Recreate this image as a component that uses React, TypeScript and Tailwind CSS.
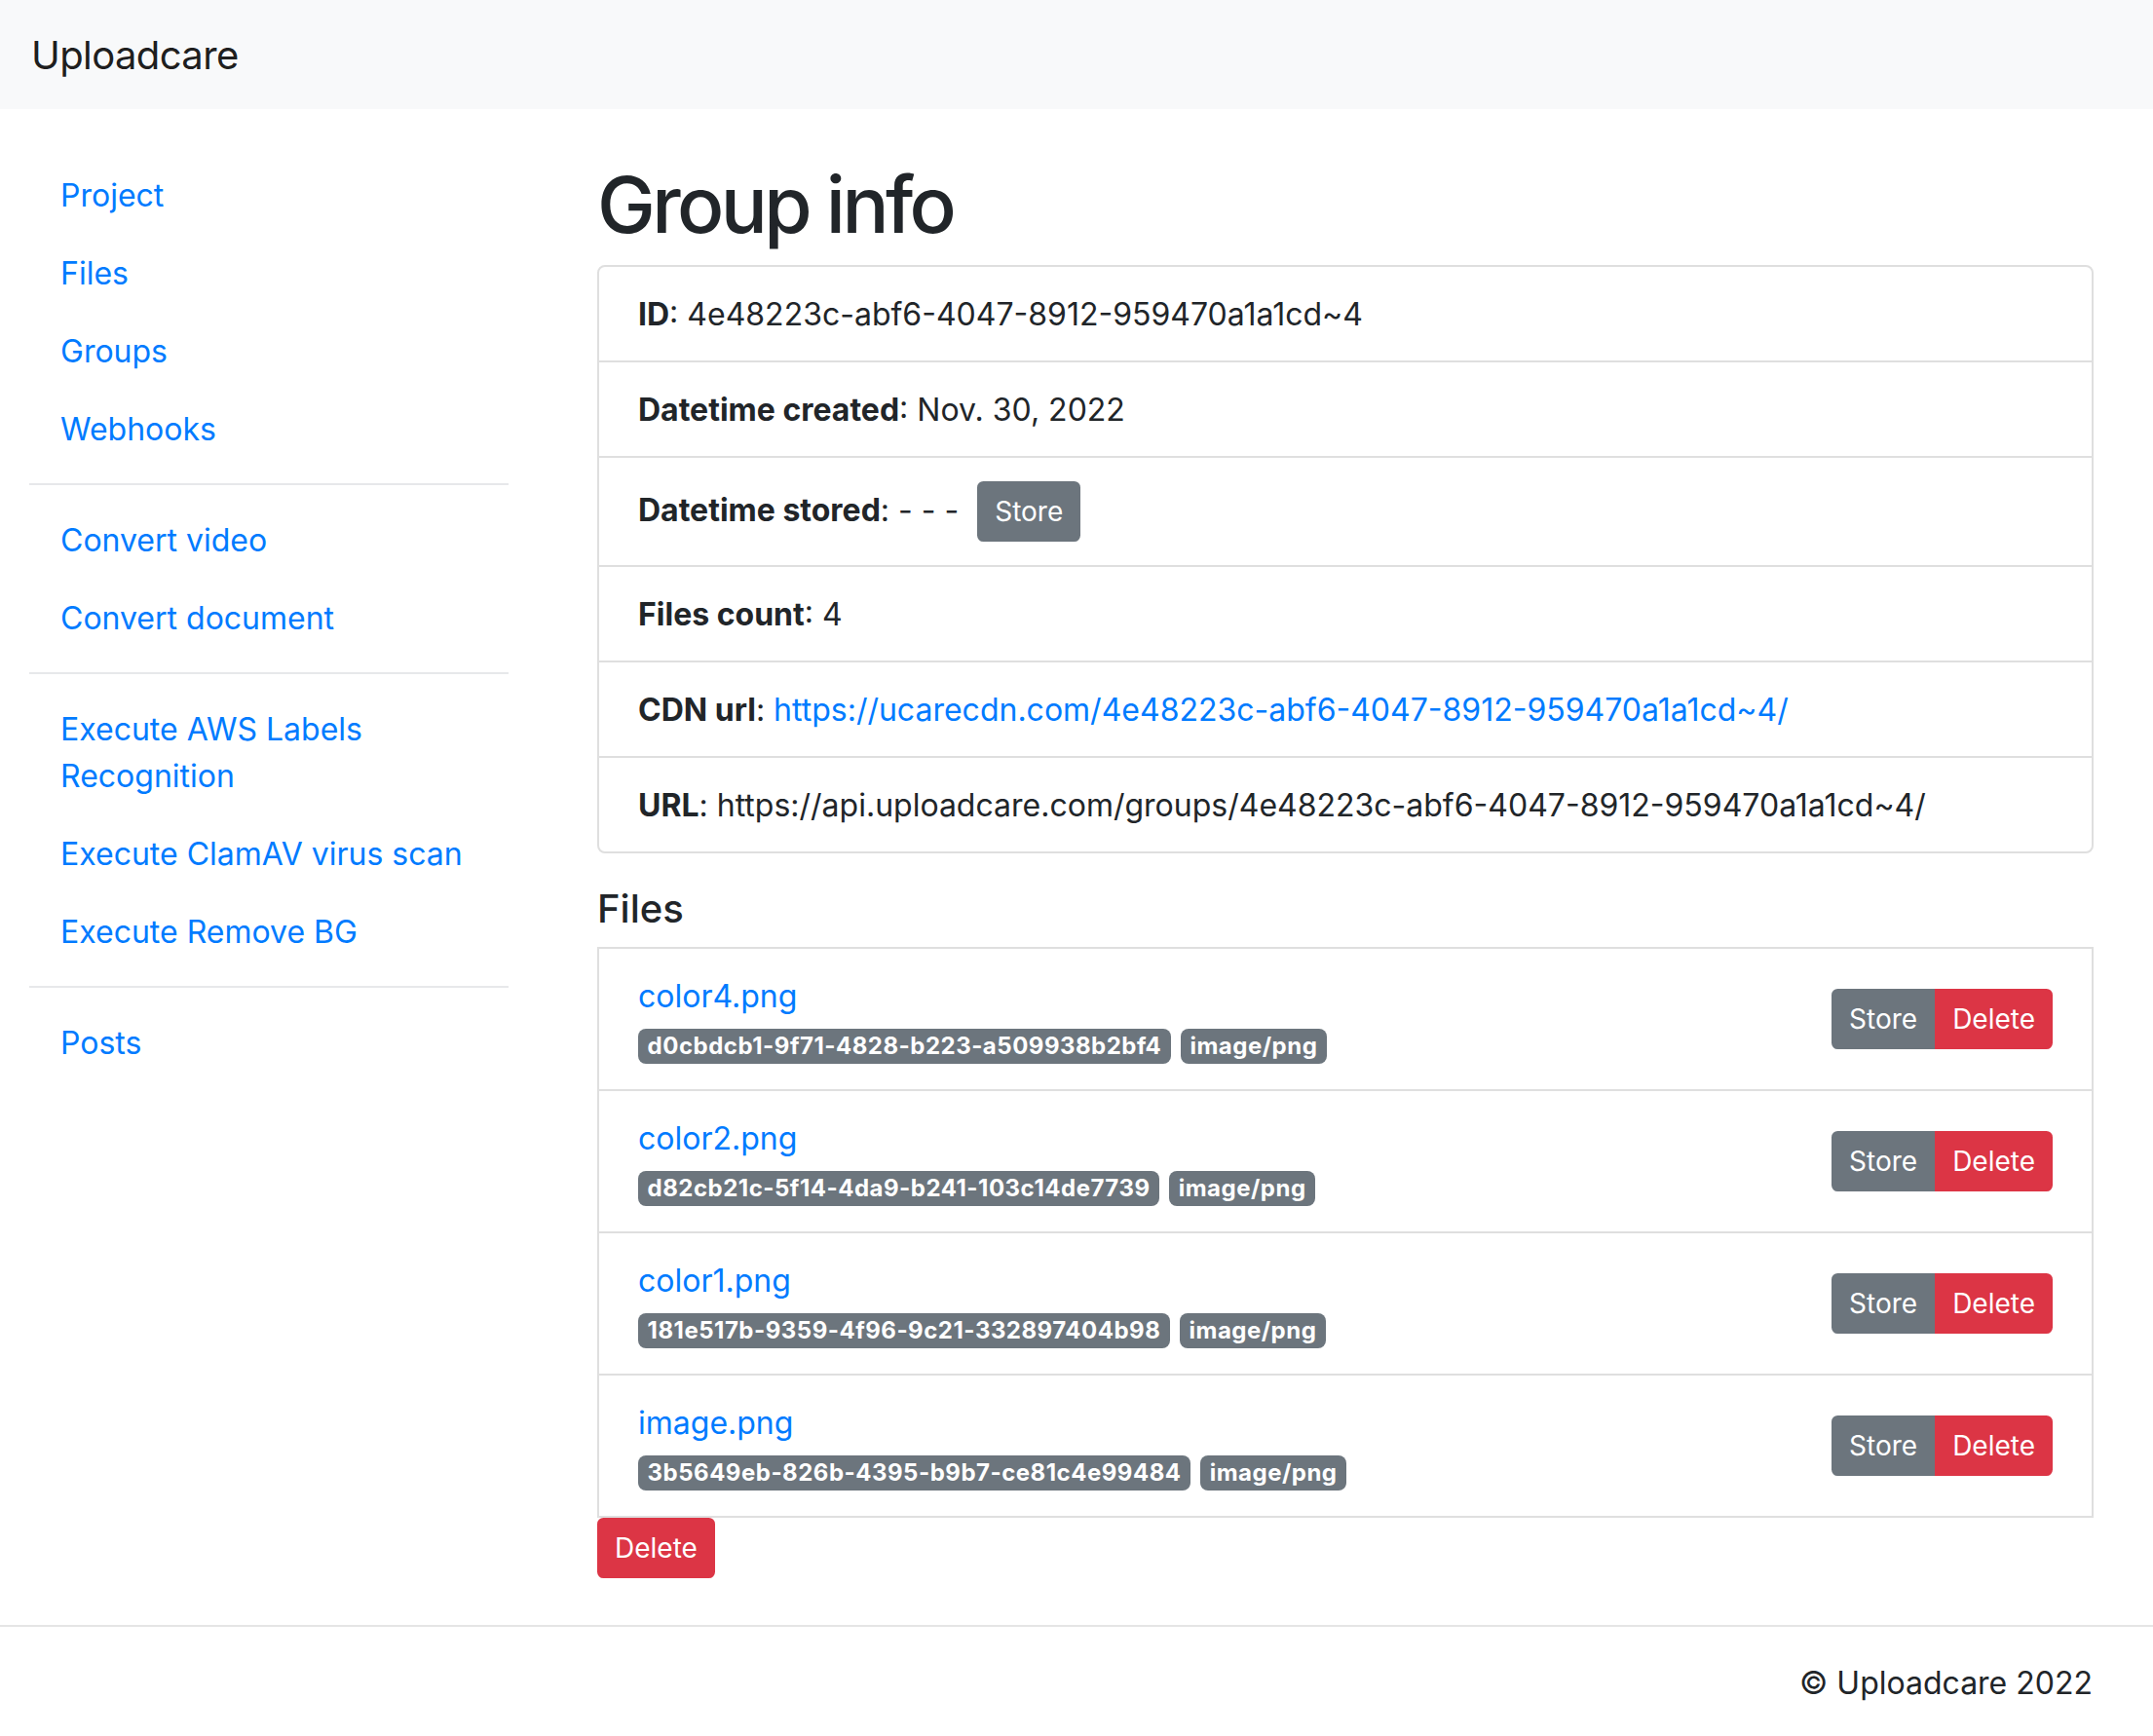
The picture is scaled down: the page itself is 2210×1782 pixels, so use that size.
import React from "react";

const sideGroups: string[][] = [
  ["Project", "Files", "Groups", "Webhooks"],
  ["Convert video", "Convert document"],
  ["Execute AWS Labels Recognition", "Execute ClamAV virus scan", "Execute Remove BG"],
  ["Posts"],
];

const files = [
  { name: "color4.png", uuid: "d0cbdcb1-9f71-4828-b223-a509938b2bf4" },
  { name: "color2.png", uuid: "d82cb21c-5f14-4da9-b241-103c14de7739" },
  { name: "color1.png", uuid: "181e517b-9359-4f96-9c21-332897404b98" },
  { name: "image.png", uuid: "3b5649eb-826b-4395-b9b7-ce81c4e99484" },
];

function Badge({ children }: { children: React.ReactNode }) {
  return (
    <span className="inline-block rounded-[8px] bg-[#6c757d] px-[9.6px] py-[6px] text-[24px] font-bold leading-[24px] tracking-[0.5px] text-white">
      {children}
    </span>
  );
}

export default function App() {
  return (
    <div className="min-h-screen bg-white font-['Inter',sans-serif] text-[32px] leading-[48px] text-[#212529]">
      <nav className="flex h-[112px] items-center bg-[#f8f9fa] px-[32px]">
        <span className="pt-[2px] text-[40px] leading-[60px] tracking-[-0.6px] text-[#000000e6]">Uploadcare</span>
      </nav>

      <div className="flex">
        <aside className="w-[552px] shrink-0 px-[30px] pt-[48px]">
          {sideGroups.map((group, gi) => (
            <div key={gi}>
              {gi > 0 && <hr className="my-[16px] border-0 border-t-2 border-[#e7e8ea]" />}
              {group.map((item) => (
                <a key={item} href="#" className="block px-[32px] pb-[15px] pt-[17px] text-[#007bff]">
                  {item}
                </a>
              ))}
            </div>
          ))}
        </aside>

        <main className="min-w-0 flex-1 pl-[61px] pr-[61px] pt-[48px]">
          <h1 className="mb-[16px] pt-[3px] pb-[-3px] text-[80px] font-medium leading-[93px] tracking-[-3.6px]">Group info</h1>

          <div className="rounded-[8px] border-2 border-[#dfdfdf] divide-y-2 divide-[#dfdfdf]">
            <div className="px-[40px] pb-[23px] pt-[25px]">
              <b>ID</b>: 4e48223c-abf6-4047-8912-959470a1a1cd~4
            </div>
            <div className="px-[40px] pb-[23px] pt-[25px]">
              <b>Datetime created</b>: Nov. 30, 2022
            </div>
            <div className="px-[40px] py-[24px]">
              <b>Datetime stored</b>: - - -{" "}
              <button className="ml-[10px] inline-block rounded-[6.4px] border-2 border-[#6c757d] bg-[#6c757d] px-[16px] py-[8px] text-[28px] leading-[42px] text-white">
                Store
              </button>
            </div>
            <div className="px-[40px] pb-[23px] pt-[25px]">
              <b>Files count</b>: 4
            </div>
            <div className="px-[40px] pb-[23px] pt-[25px]">
              <b>CDN url</b>:{" "}
              <a href="#" className="text-[#007bff]">
                https://ucarecdn.com/4e48223c-abf6-4047-8912-959470a1a1cd~4/
              </a>
            </div>
            <div className="px-[40px] pb-[23px] pt-[25px]">
              <b>URL</b>: https://api.uploadcare.com/groups/4e48223c-abf6-4047-8912-959470a1a1cd~4/
            </div>
          </div>

          <h5 className="mb-[16px] mt-[32px] pt-[2px] text-[40px] font-medium leading-[46px]">Files</h5>

          <div className="border-2 border-[#dfdfdf] divide-y-2 divide-[#dfdfdf]">
            {files.map((f) => (
              <div key={f.uuid} className="flex items-center justify-between px-[40px] py-[24px]">
                <div>
                  <a href="#" className="block pt-[2px] leading-[46px] text-[#007bff]">
                    {f.name}
                  </a>
                  <div className="flex h-[48px] items-center gap-[10px] pt-[8px]">
                    <Badge>{f.uuid}</Badge>
                    <Badge>image/png</Badge>
                  </div>
                </div>
                <div className="flex">
                  <button className="rounded-l-[6.4px] border-2 border-[#6c757d] bg-[#6c757d] px-[16px] py-[8px] text-[28px] leading-[42px] text-white">
                    Store
                  </button>
                  <button className="rounded-r-[6.4px] border-2 border-[#dc3545] bg-[#dc3545] px-[16px] py-[8px] text-[28px] leading-[42px] text-white">
                    Delete
                  </button>
                </div>
              </div>
            ))}
          </div>
          <button className="rounded-[6.4px] border-2 border-[#dc3545] bg-[#dc3545] px-[16px] py-[8px] text-[28px] leading-[42px] text-white">
            Delete
          </button>
        </main>
      </div>

      <footer className="mt-[48px] border-t-2 border-[#e5e5e5] pb-[30px] pt-[34px] pr-[62px] text-right">
        © Uploadcare 2022
      </footer>
    </div>
  );
}
